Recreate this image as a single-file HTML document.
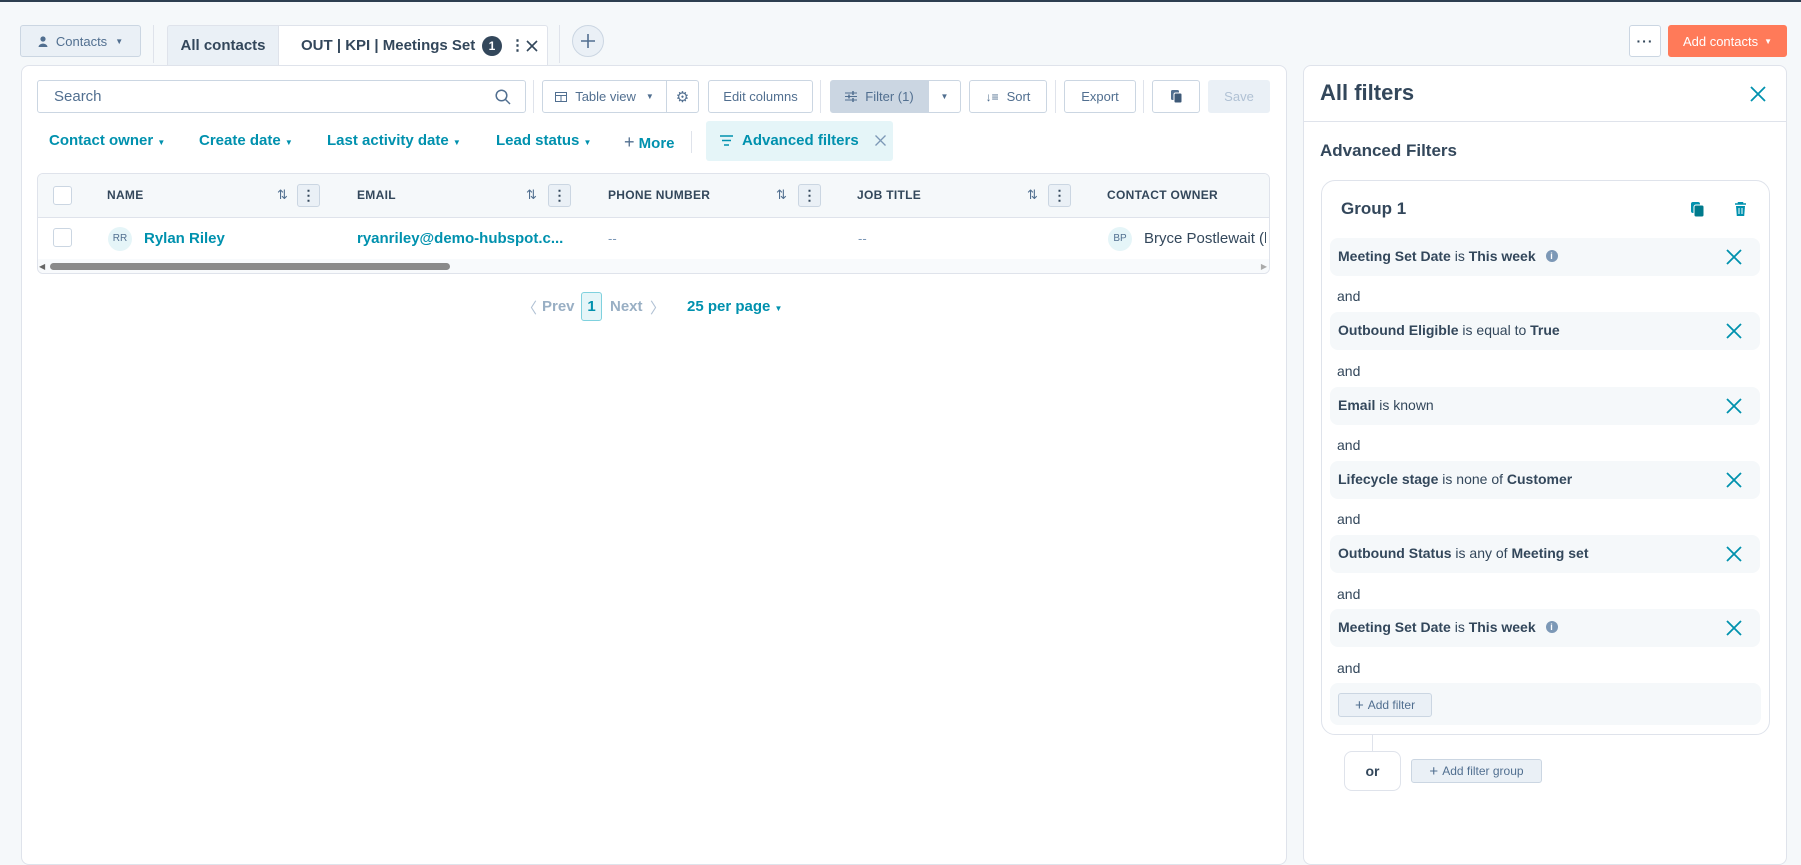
<!DOCTYPE html>
<html><head><meta charset="utf-8"><style>
*{box-sizing:border-box;margin:0;padding:0}
body{width:1801px;height:827px;overflow:hidden;background:#f5f8fa;font-family:"Liberation Sans",sans-serif;color:#33475b;position:relative}
.a{position:absolute}
.btn{position:absolute;border:1px solid #cbd6e2;border-radius:3px;background:#fff;font-size:13px;color:#33475b;display:flex;align-items:center;justify-content:center}
.teal{color:#0091ae}
.hd{position:absolute;top:188px;font-size:12px;font-weight:bold;letter-spacing:.3px;color:#33475b}
.dots{position:absolute;top:184px;width:23px;height:23px;border:1px solid #cbd6e2;border-radius:3px;background:#eaf0f6;font-size:14px;font-weight:bold;text-align:center;line-height:20px}
.srt{position:absolute;top:187px;font-size:13px;color:#516f90}
.fr{position:absolute;left:1330px;width:430px;height:38px;background:#f5f8fa;border-radius:8px;font-size:14px;padding-left:8px;line-height:36px;color:#33475b}
.fr b{font-weight:bold}
.fr svg{position:absolute;right:18px;top:11px}
.and{position:absolute;left:1337px;font-size:14px;color:#33475b}
</style></head><body>
<div class="a" style="left:0;top:0;width:1801px;height:2px;background:#2d3e50"></div>

<div class="btn" style="left:20px;top:25px;width:121px;height:32px;background:#eaf0f6;color:#516f90;font-size:13px">
<svg width="10" height="11" viewBox="0 0 10 11" style="margin-right:8px"><circle cx="5" cy="3" r="2.6" fill="#516f90"/><path d="M0.5 11 C1 6.5 9 6.5 9.5 11Z" fill="#516f90"/></svg>Contacts <span style="margin-left:8px;font-size:8px">▼</span></div>
<div class="a" style="left:153px;top:25px;width:1px;height:38px;background:#dfe3eb"></div>
<div class="a" style="left:167px;top:25px;width:112px;height:40px;background:#eaf0f6;border:1px solid #dfe3eb;border-bottom:none;border-radius:3px 0 0 0;font-size:15px;font-weight:bold;line-height:40px;text-align:center">All contacts</div>
<div class="a" style="left:278px;top:25px;width:270px;height:41px;background:#fff;border:1px solid #dfe3eb;border-bottom:none;border-radius:0 3px 0 0;font-size:15px;font-weight:bold;line-height:40px;padding-left:22px">OUT | KPI | Meetings Set
<span class="a" style="left:203px;top:10px;width:20px;height:20px;border-radius:50%;background:#33475b;color:#fff;font-size:12px;line-height:20px;text-align:center">1</span>
<span class="a" style="left:231px;top:0;font-size:15px">⋮</span>
<svg class="a" style="left:247px;top:14px" width="12" height="12"><path d="M1 1L11 11M11 1L1 11" stroke="#33475b" stroke-width="1.6"/></svg></div>
<div class="a" style="left:559px;top:25px;width:1px;height:38px;background:#dfe3eb"></div>
<div class="a" style="left:572px;top:25px;width:32px;height:32px;border-radius:50%;border:1px solid #cbd6e2;background:#eaf0f6"><svg class="a" style="left:8px;top:8px" width="14" height="14"><path d="M7 0V14M0 7H14" stroke="#516f90" stroke-width="1.6"/></svg></div>

<div class="btn" style="left:1629px;top:25px;width:32px;height:32px;font-size:14px;font-weight:bold;letter-spacing:1px">···</div>
<div class="btn" style="left:1668px;top:25px;width:119px;height:32px;background:#ff7a59;border-color:#ff7a59;color:#fff;font-size:13px">Add contacts <span style="font-size:8px;margin-left:6px">▼</span></div>

<!-- main card -->
<div class="a" style="left:21px;top:65px;width:1266px;height:800px;background:#fff;border:1px solid #dfe3eb;border-radius:8px"></div>
<div class="a" style="left:37px;top:80px;width:489px;height:33px;border:1px solid #cbd6e2;border-radius:3px;font-size:15px;color:#516f90;line-height:31px;padding-left:16px">Search
<svg class="a" style="right:14px;top:8px" width="16" height="16"><circle cx="6.5" cy="6.5" r="5.3" stroke="#516f90" stroke-width="1.5" fill="none"/><path d="M10.5 10.5L15 15" stroke="#516f90" stroke-width="1.5"/></svg></div>
<div class="a" style="left:533px;top:80px;width:1px;height:33px;background:#dfe3eb"></div>
<div class="btn" style="left:542px;top:80px;width:125px;height:33px;border-radius:3px 0 0 3px;color:#516f90">
<svg width="12" height="10" style="margin-right:8px"><rect x=".5" y=".5" width="11" height="9" fill="none" stroke="#516f90"/><path d="M0 3.5H12M6 3.5V10" stroke="#516f90"/></svg>Table view<span style="font-size:8px;margin-left:10px">▼</span></div>
<div class="btn" style="left:666px;top:80px;width:33px;height:33px;border-radius:0 3px 3px 0;color:#516f90;font-size:15px">⚙</div>
<div class="btn" style="left:708px;top:80px;width:105px;height:33px;color:#516f90">Edit columns</div>
<div class="a" style="left:820px;top:80px;width:1px;height:33px;background:#dfe3eb"></div>
<div class="btn" style="left:830px;top:80px;width:99px;height:33px;background:#cbd6e2;border-color:#cbd6e2;border-radius:3px 0 0 3px;color:#516f90">
<svg width="12" height="11" style="margin-right:8px"><path d="M0 2H12M0 5.5H12M0 9H12" stroke="#516f90"/><path d="M8 0V4M4 3.5V7.5M8 7V11" stroke="#516f90" stroke-width="1.5"/></svg>Filter (1)</div>
<div class="btn" style="left:928px;top:80px;width:33px;height:33px;border-radius:0 3px 3px 0;font-size:8px;color:#516f90">▼</div>
<div class="btn" style="left:969px;top:80px;width:78px;height:33px;color:#516f90"><span style="font-size:12px;margin-right:8px;font-weight:bold">↓≡</span>Sort</div>
<div class="a" style="left:1055px;top:80px;width:1px;height:33px;background:#dfe3eb"></div>
<div class="btn" style="left:1064px;top:80px;width:72px;height:33px;color:#516f90">Export</div>
<div class="a" style="left:1143px;top:80px;width:1px;height:33px;background:#dfe3eb"></div>
<div class="btn" style="left:1152px;top:80px;width:48px;height:33px"><svg width="11" height="13"><rect x="0" y="0" width="8" height="10" rx="1.5" fill="#516f90"/><rect x="3" y="3" width="8" height="10" rx="1.5" fill="#3e5a78" stroke="#fff" stroke-width="1"/></svg></div>
<div class="btn" style="left:1208px;top:80px;width:62px;height:33px;background:#eaf0f6;border-color:#eaf0f6;color:#b0c1d4">Save</div>

<div class="a teal" style="left:49px;top:132px;font-size:15px;font-weight:bold">Contact owner <span style="font-size:8px">▼</span></div>
<div class="a teal" style="left:199px;top:132px;font-size:15px;font-weight:bold">Create date <span style="font-size:8px">▼</span></div>
<div class="a teal" style="left:327px;top:132px;font-size:15px;font-weight:bold">Last activity date <span style="font-size:8px">▼</span></div>
<div class="a teal" style="left:496px;top:132px;font-size:15px;font-weight:bold">Lead status <span style="font-size:8px">▼</span></div>
<div class="a teal" style="left:624px;top:132px;font-size:15px;font-weight:bold"><span style="color:#516f90;font-weight:normal;font-size:18px">+</span> More</div>
<div class="a" style="left:691px;top:131px;width:1px;height:22px;background:#dfe3eb"></div>
<div class="a" style="left:706px;top:121px;width:187px;height:40px;background:#e5f5f8;border-radius:3px"></div>
<svg class="a" style="left:720px;top:135px" width="13" height="11"><path d="M0 1H13M2 5.5H11M4 10H9" stroke="#0091ae" stroke-width="1.4"/></svg>
<div class="a teal" style="left:742px;top:132px;font-size:15px;font-weight:bold">Advanced filters</div>
<svg class="a" style="left:875px;top:135px" width="11" height="11"><path d="M.5 .5L10.5 10.5M10.5 .5L.5 10.5" stroke="#7c98b6" stroke-width="1.3"/></svg>

<!-- table -->
<div class="a" style="left:37px;top:173px;width:1233px;height:101px;border:1px solid #dfe3eb;border-radius:6px;overflow:hidden">
<div class="a" style="left:0;top:0;width:100%;height:44px;background:#f5f8fa;border-bottom:1px solid #dfe3eb"></div>
<div class="a" style="left:0;top:85px;width:100%;height:15px;background:#f8fafc"></div>
<div class="a" style="left:12px;top:89px;width:400px;height:7px;border-radius:4px;background:#8a8a8a"></div>
<div class="a" style="left:1px;top:88px;font-size:8px;color:#666">◀</div>
<div class="a" style="right:2px;top:88px;font-size:8px;color:#aaa">▶</div>
</div>
<div class="a" style="left:53px;top:186px;width:19px;height:19px;border:1px solid #cbd6e2;border-radius:3px;background:#fff"></div>
<div class="a" style="left:53px;top:228px;width:19px;height:19px;border:1px solid #cbd6e2;border-radius:3px;background:#fff"></div>
<div class="hd" style="left:107px">NAME</div><div class="srt" style="left:277px">⇅</div><div class="dots" style="left:297px">⋮</div>
<div class="hd" style="left:357px">EMAIL</div><div class="srt" style="left:526px">⇅</div><div class="dots" style="left:548px">⋮</div>
<div class="hd" style="left:608px">PHONE NUMBER</div><div class="srt" style="left:776px">⇅</div><div class="dots" style="left:798px">⋮</div>
<div class="hd" style="left:857px">JOB TITLE</div><div class="srt" style="left:1027px">⇅</div><div class="dots" style="left:1048px">⋮</div>
<div class="hd" style="left:1107px">CONTACT OWNER</div>
<div class="a" style="left:108px;top:227px;width:24px;height:24px;border-radius:50%;background:#e5f5f8;font-size:10px;line-height:24px;text-align:center;color:#516f90">RR</div>
<div class="a teal" style="left:144px;top:230px;font-size:15px;font-weight:bold">Rylan Riley</div>
<div class="a teal" style="left:357px;top:230px;font-size:15px;font-weight:bold">ryanriley@demo-hubspot.c...</div>
<div class="a" style="left:608px;top:231px;font-size:13px;color:#7c98b6">--</div>
<div class="a" style="left:858px;top:231px;font-size:13px;color:#7c98b6">--</div>
<div class="a" style="left:1108px;top:227px;width:24px;height:24px;border-radius:50%;background:#e5f5f8;font-size:10px;line-height:24px;text-align:center;color:#516f90">BP</div>
<div class="a" style="left:1144px;top:230px;font-size:15px;color:#33475b;width:122px;overflow:hidden;white-space:nowrap">Bryce Postlewait (h</div>

<div class="a" style="left:522px;top:297px;font-size:15px;color:#b0c1d4">〈</div>
<div class="a" style="left:542px;top:298px;font-size:15px;font-weight:bold;color:#99afc4">Prev</div>
<div class="a" style="left:581px;top:292px;width:21px;height:29px;border:1px solid #7fd1de;background:#e5f5f8;border-radius:3px;font-size:15px;font-weight:bold;color:#0091ae;text-align:center;line-height:27px">1</div>
<div class="a" style="left:610px;top:298px;font-size:15px;font-weight:bold;color:#99afc4">Next</div>
<div class="a" style="left:650px;top:297px;font-size:15px;color:#b0c1d4">〉</div>
<div class="a teal" style="left:687px;top:298px;font-size:15px;font-weight:bold">25 per page <span style="font-size:8px">▼</span></div>

<!-- right panel -->
<div class="a" style="left:1303px;top:65px;width:484px;height:800px;background:#fff;border:1px solid #dfe3eb;border-radius:8px"></div>
<div class="a" style="left:1303px;top:121px;width:484px;height:1px;background:#dfe3eb"></div>
<div class="a" style="left:1320px;top:80px;font-size:22px;font-weight:bold;color:#33475b">All filters</div>
<svg class="a" style="left:1750px;top:86px" width="16" height="16"><path d="M1 1L15 15M15 1L1 15" stroke="#0091ae" stroke-width="1.8"/></svg>
<div class="a" style="left:1320px;top:141px;font-size:17px;font-weight:bold">Advanced Filters</div>
<div class="a" style="left:1321px;top:180px;width:449px;height:555px;border:1px solid #dfe3eb;border-radius:14px"></div>
<div class="a" style="left:1341px;top:199px;font-size:17px;font-weight:bold">Group 1</div>
<svg class="a" style="left:1691px;top:202px" width="13" height="15"><rect x="0" y="0" width="9" height="11" rx="2" fill="#0091ae"/><rect x="3" y="3" width="10" height="12" rx="2" fill="#007a8c" stroke="#fff"/></svg>
<svg class="a" style="left:1735px;top:202px" width="11" height="14"><path d="M0 2H11M3.5 2V0.5H7.5V2" stroke="#0091ae" stroke-width="1.5" fill="none"/><path d="M1 4H10L9.2 14H1.8Z" fill="#0091ae"/><path d="M4 6V12M7 6V12" stroke="#fff"/></svg>

<div class="fr" style="top:238px"><b>Meeting Set Date</b> is <b>This week</b> <span style="display:inline-block;width:12px;height:12px;border-radius:50%;background:#7c98b6;color:#fff;font-size:9px;line-height:12px;text-align:center;margin-left:6px;vertical-align:2px;font-weight:bold">i</span><svg width="16" height="16"><path d="M1 1L15 15M15 1L1 15" stroke="#0091ae" stroke-width="1.8"/></svg></div>
<div class="and" style="top:288px">and</div>
<div class="fr" style="top:312px"><b>Outbound Eligible</b> is equal to <b>True</b><svg width="16" height="16"><path d="M1 1L15 15M15 1L1 15" stroke="#0091ae" stroke-width="1.8"/></svg></div>
<div class="and" style="top:363px">and</div>
<div class="fr" style="top:387px"><b>Email</b> is known<svg width="16" height="16"><path d="M1 1L15 15M15 1L1 15" stroke="#0091ae" stroke-width="1.8"/></svg></div>
<div class="and" style="top:437px">and</div>
<div class="fr" style="top:461px"><b>Lifecycle stage</b> is none of <b>Customer</b><svg width="16" height="16"><path d="M1 1L15 15M15 1L1 15" stroke="#0091ae" stroke-width="1.8"/></svg></div>
<div class="and" style="top:511px">and</div>
<div class="fr" style="top:535px"><b>Outbound Status</b> is any of <b>Meeting set</b><svg width="16" height="16"><path d="M1 1L15 15M15 1L1 15" stroke="#0091ae" stroke-width="1.8"/></svg></div>
<div class="and" style="top:586px">and</div>
<div class="fr" style="top:609px"><b>Meeting Set Date</b> is <b>This week</b> <span style="display:inline-block;width:12px;height:12px;border-radius:50%;background:#7c98b6;color:#fff;font-size:9px;line-height:12px;text-align:center;margin-left:6px;vertical-align:2px;font-weight:bold">i</span><svg width="16" height="16"><path d="M1 1L15 15M15 1L1 15" stroke="#0091ae" stroke-width="1.8"/></svg></div>
<div class="and" style="top:660px">and</div>
<div class="a" style="left:1330px;top:683px;width:431px;height:42px;background:#f5f8fa;border-radius:8px"></div>
<div class="btn" style="left:1338px;top:693px;width:94px;height:24px;background:#eaf0f6;color:#516f90;font-size:12px"><span style="font-size:15px;margin-right:4px">+</span>Add filter</div>
<div class="a" style="left:1372px;top:735px;width:1px;height:16px;background:#dfe3eb"></div>
<div class="a" style="left:1344px;top:751px;width:57px;height:40px;border:1px solid #dfe3eb;border-radius:8px;background:#fff;font-size:14px;font-weight:bold;text-align:center;line-height:38px">or</div>
<div class="btn" style="left:1411px;top:759px;width:131px;height:24px;background:#eaf0f6;color:#516f90;font-size:12px"><span style="font-size:15px;margin-right:4px">+</span>Add filter group</div>
</body></html>
